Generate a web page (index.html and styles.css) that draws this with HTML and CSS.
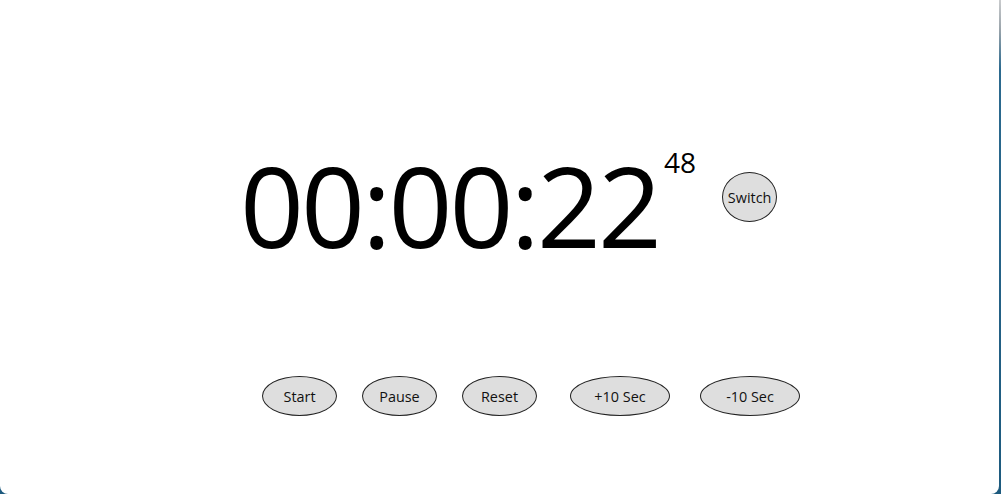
FILE: index.html
```html
<!DOCTYPE html>
<html lang="en">
<head>
<meta charset="utf-8">
<title>Stopwatch</title>
<link rel="stylesheet" href="styles.css">
</head>
<body>
<main class="page">
  <section class="clock">
    <div class="time">00:00:22<span class="ms">48</span></div>
    <button class="btn switch">Switch</button>
  </section>
  <section class="controls">
    <button class="btn pill">Start</button>
    <button class="btn pill">Pause</button>
    <button class="btn pill">Reset</button>
    <button class="btn pill wide step-gap">+10 Sec</button>
    <button class="btn pill wide">-10 Sec</button>
  </section>
</main>
</body>
</html>
```

FILE: styles.css
```css
html, body {
  margin: 0;
  height: 100%;
}

body {
  background: linear-gradient(to bottom, #c9cbcd 0%, #9aa4ab 6%, #2c6a8f 14%, #1d5a7e 100%);
  font-family: "Open Sans", "Noto Sans", sans-serif;
  overflow: hidden;
}

.page {
  width: 999px;
  height: 494px;
  background: #fff;
  border-radius: 0 0 8px 8px;
  display: flex;
  flex-direction: column;
  box-sizing: border-box;
}

.clock {
  display: flex;
  align-items: center;
  padding: 149px 0 0 240px;
}

.time {
  font-size: 112px;
  line-height: 1;
  color: #000;
  letter-spacing: -3px;
}

.ms {
  font-size: 28px;
  letter-spacing: 0;
  vertical-align: top;
  position: relative;
  top: -1px;
  margin-left: 5px;
}

.btn {
  font-family: "Open Sans", "Noto Sans", sans-serif;
  font-size: 14.4px;
  color: #111;
  background: #dedede;
  border: 1px solid #222;
  border-radius: 50%;
  padding: 0;
  cursor: pointer;
}

.switch {
  width: 55px;
  height: 50px;
  margin-left: 26px;
  margin-top: -16px;
}

.controls {
  display: flex;
  gap: 25px;
  padding: 0 0 0 262px;
  margin-top: 115px;
}

.pill {
  width: 75px;
  height: 40px;
}

.wide {
  width: 100px;
}

.step-gap {
  margin-left: 8px;
  margin-right: 5px;
}
```
